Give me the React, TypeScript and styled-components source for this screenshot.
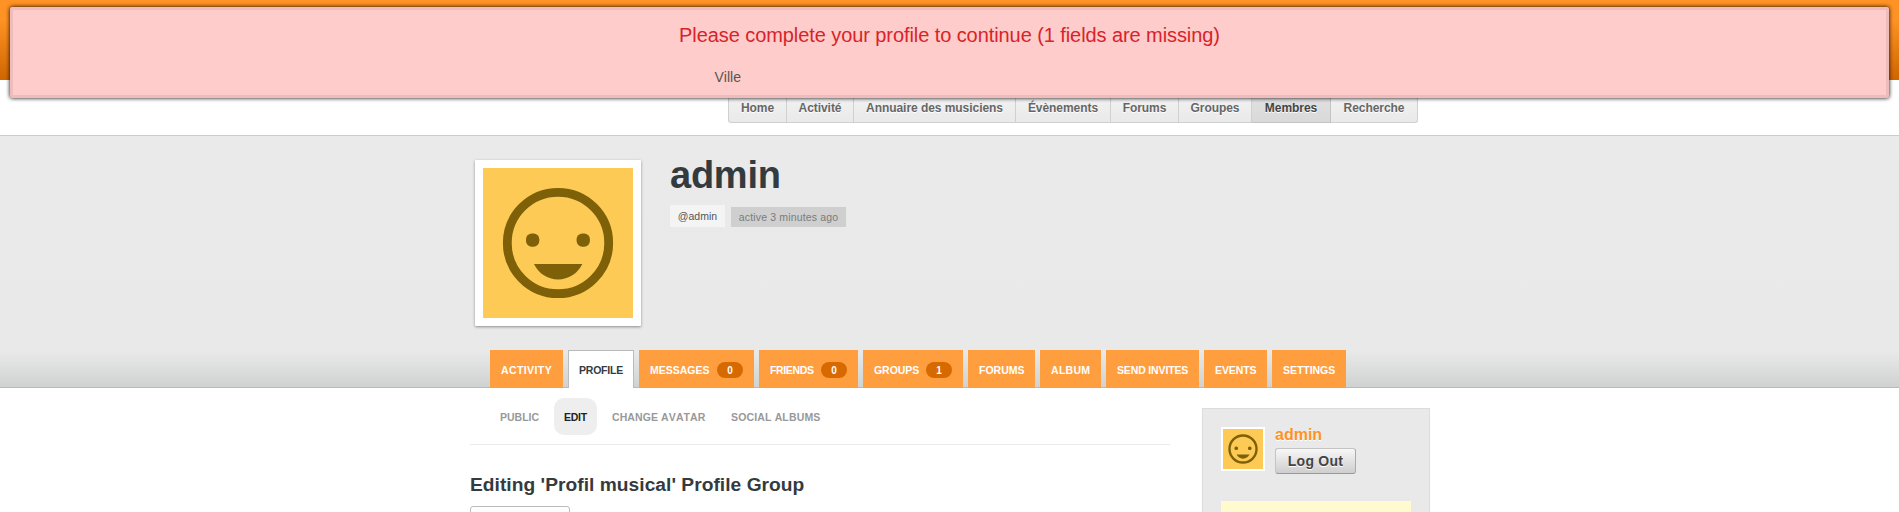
import React from 'react';
import styled, { createGlobalStyle, css } from 'styled-components';

const GlobalStyle = createGlobalStyle`
  * { box-sizing: border-box; }
  html, body { margin: 0; padding: 0; }
  body {
    height: 512px;
    overflow: hidden;
    background: #fff;
    color: #555;
    font-family: "Liberation Sans", Arial, sans-serif;
    font-kerning: none;
  }
  h1, h2, p, ul { margin: 0; padding: 0; }
  ul { list-style: none; }
`;

const Page = styled.div`
  position: relative;
  height: 512px;
  overflow: hidden;
`;

const Container = styled.div`
  width: 961px;
  margin: 0 auto;
  padding-left: 1px;
`;

const Alert = styled.div`
  position: absolute;
  z-index: 10;
  top: 7px;
  left: 10px;
  right: 10px;
  height: 91px;
  padding-top: 13px;
  border: 3px solid #eebcbc;
  border-radius: 2px;
  background: #fecccb;
  box-shadow: 0 0 4px 0 #000;
`;

const AlertTitle = styled.p`
  color: #d8232a;
  font-size: 20px;
  line-height: 24px;
  letter-spacing: -0.08px;
  text-align: center;
`;

const AlertField = styled.p`
  width: 470px;
  margin: 20px auto 0;
  font-size: 14px;
  line-height: 20px;
`;

const TopBar = styled.div`
  height: 80px;
  background: linear-gradient(#ff9224 0%, #ff9224 25%, #ce6500 100%);
`;

const NavBar = styled.div`
  height: 56px;
  border-bottom: 1px solid #ccc;
`;

const NavList = styled.ul`
  display: flex;
  width: 690px;
  height: 43px;
  margin-left: 258px;
  border: 1px solid #d0d0d0;
  border-top: 0;
  border-radius: 0 0 3px 3px;
  background: linear-gradient(#f8f8f8, #e9e9e9);
`;

const NavItem = styled.li<{ $w: number; $active?: boolean }>`
  width: ${p => p.$w}px;
  flex: none;
  padding-top: 19px;
  border-right: 1px solid #d0d0d0;
  font-size: 12px;
  font-weight: bold;
  line-height: 18px;
  letter-spacing: -0.05px;
  text-align: center;
  white-space: nowrap;
  text-shadow: 0 1px 0 #fff;
  color: #666;
  &:last-child { border-right: 0; }
  ${p => p.$active && css`
    height: 43px;
    color: #444;
    background: linear-gradient(#e6e6e6, #d9d9d9);
    border: 1px solid #c4c4c4;
    border-top: 0;
    border-left: 0;
  `}
`;

const Hero = styled.header`
  height: 252px;
  border-bottom: 1px solid #b9b9bb;
  background: linear-gradient(#eaeaea 0, #e9e9e9 215px, #d0d2d2 251px);
`;

const HeroTop = styled.div`
  display: flex;
  height: 214px;
  padding: 24px 0 0 5px;
`;

const AvatarCard = styled.div`
  width: 166px;
  height: 166px;
  padding: 8px;
  border-radius: 1px;
  background: #fff;
  box-shadow: 0 1px 3px rgba(0, 0, 0, 0.4);
`;

const FaceSvg = styled.svg`
  display: block;
`;

const Identity = styled.div`
  margin-left: 29px;
`;

const UserTitle = styled.h1`
  height: 45px;
  margin-top: -8px;
  color: #333b3f;
  font-size: 38px;
  line-height: 46px;
  letter-spacing: -0.25px;
`;

const Tags = styled.div`
  display: flex;
  align-items: flex-end;
  gap: 6px;
  height: 30px;
`;

const Tag = styled.span<{ $w: number; $h: number; $muted?: boolean }>`
  width: ${p => p.$w}px;
  height: ${p => p.$h}px;
  background: ${p => (p.$muted ? '#cfcfcf' : '#f4f4f4')};
  color: ${p => (p.$muted ? '#7b7b7b' : '#555')};
  font-size: 10.5px;
  letter-spacing: ${p => (p.$muted ? 0.15 : 0)}px;
  line-height: ${p => p.$h}px;
  text-align: center;
  white-space: nowrap;
`;

const Tabs = styled.ul`
  display: flex;
  gap: 5px;
  padding-left: 20px;
`;

const Tab = styled.li<{ $w: number; $track: number; $active?: boolean }>`
  display: flex;
  align-items: center;
  justify-content: space-between;
  width: ${p => p.$w}px;
  height: 38px;
  padding: 2px 11px 0;
  flex: none;
  background: #ff9e3f;
  color: #fff;
  font-size: 10.5px;
  font-weight: bold;
  letter-spacing: ${p => p.$track}px;
  white-space: nowrap;
  ${p => p.$active && css`
    padding: 1px 10px 0;
    border: 1px solid #bbb;
    border-bottom: 0;
    background: #fff;
    color: #333b3f;
  `}
`;

const Count = styled.span`
  width: 26px;
  height: 16px;
  margin-top: -1px;
  border-radius: 8px;
  background: #d66a00;
  font-size: 10px;
  line-height: 17px;
  letter-spacing: 0;
  text-align: center;
`;

const Columns = styled.div`
  display: flex;
  justify-content: space-between;
  align-items: flex-start;
`;

const Main = styled.main`
  width: 700px;
`;

const SubNav = styled.ul`
  display: flex;
  gap: 5px;
  height: 57px;
  padding: 10px 0 0 20px;
  border-bottom: 1px solid #eaeaea;
`;

const SubItem = styled.li<{ $w: number; $track: number; $active?: boolean }>`
  width: ${p => p.$w}px;
  height: 37px;
  padding-left: 10px;
  border-radius: 10px;
  background: ${p => (p.$active ? '#eee' : 'none')};
  color: ${p => (p.$active ? '#222' : '#999')};
  font-size: 10.5px;
  font-weight: bold;
  line-height: 38px;
  letter-spacing: ${p => p.$track}px;
  white-space: nowrap;
`;

const GroupTitle = styled.h2`
  margin-top: 27px;
  color: #333b3f;
  font-size: 19.2px;
  line-height: 26px;
  letter-spacing: 0.03px;
`;

const GroupButton = styled.div`
  width: 100px;
  height: 30px;
  margin-top: 8px;
  border: 1px solid #bbb;
  border-radius: 3px;
  background: linear-gradient(#fff, #ededed);
`;

const Sidebar = styled.aside`
  width: 228px;
  height: 140px;
  margin-top: 20px;
  padding: 18px;
  border: 1px solid #dcdcdc;
  background: #e9e9e9;
`;

const Account = styled.div`
  display: flex;
  gap: 10px;
  height: 74px;
`;

const Thumb = styled.div`
  width: 44px;
  height: 44px;
  border: 2px solid #fff;
`;

const AccountName = styled.p`
  height: 21px;
  color: #ff9224;
  font-size: 16px;
  font-weight: bold;
  line-height: 16px;
  text-shadow: 0 1px 0 #fff;
`;

const LogOut = styled.button`
  display: block;
  width: 81px;
  height: 26px;
  padding: 0;
  border: 1px solid #bbb;
  border-color: #c4c4c4 #aaa #999 #c4c4c4;
  border-radius: 3px;
  background: linear-gradient(#f7f7f7, #cecece);
  color: #444;
  font: bold 14px/24px "Liberation Sans", Arial, sans-serif;
  letter-spacing: 0.25px;
  text-shadow: 0 1px 0 #fff;
`;

const Notice = styled.div`
  width: 190px;
  height: 60px;
  background: #fffbcf;
`;

function Face({ size }: { size: number }) {
  return (
    <FaceSvg width={size} height={size} viewBox="0 0 150 150">
      <rect width="150" height="150" fill="#fcca55" />
      <circle cx="75" cy="75" r="50.7" fill="none" stroke="#7d6008" strokeWidth="8.8" />
      <rect x="43" y="65.5" width="13.3" height="13.2" rx="5.7" fill="#7d6008" />
      <rect x="93.6" y="65.5" width="13.3" height="13.2" rx="5.7" fill="#7d6008" />
      <path d="M51 96H99.3C94.5 105.8 85.5 111.4 75 111.4S55.8 105.8 51 96Z" fill="#7d6008" />
    </FaceSvg>
  );
}

const navItems = [
  { label: 'Home', w: 58 },
  { label: 'Activité', w: 67 },
  { label: 'Annuaire des musiciens', w: 162 },
  { label: 'Évènements', w: 95 },
  { label: 'Forums', w: 68 },
  { label: 'Groupes', w: 73 },
  { label: 'Membres', w: 79, active: true },
  { label: 'Recherche', w: 86 },
];

const tabs: { label: string; w: number; track: number; count?: number }[] = [
  { label: 'Activity', w: 73, track: 0.4 },
  { label: 'Profile', w: 66, track: -0.22 },
  { label: 'Messages', w: 115, track: 0, count: 0 },
  { label: 'Friends', w: 99, track: -0.35, count: 0 },
  { label: 'Groups', w: 100, track: -0.05, count: 1 },
  { label: 'Forums', w: 67, track: 0 },
  { label: 'Album', w: 61, track: 0.3 },
  { label: 'Send Invites', w: 93, track: -0.15 },
  { label: 'Events', w: 63, track: -0.1 },
  { label: 'Settings', w: 74, track: -0.05 },
];

const subItems = [
  { label: 'Public', w: 59, track: 0 },
  { label: 'Edit', w: 43, track: -0.25, active: true },
  { label: 'Change Avatar', w: 114, track: 0.1 },
  { label: 'Social Albums', w: 110, track: 0.15 },
];

export default function App() {
  return (
    <Page>
      <GlobalStyle />
      <Alert>
        <AlertTitle>Please complete your profile to continue (1 fields are missing)</AlertTitle>
        <AlertField>Ville</AlertField>
      </Alert>
      <TopBar />
      <NavBar>
        <Container>
          <NavList>
            {navItems.map(n => (
              <NavItem key={n.label} $w={n.w} $active={n.active}>{n.label}</NavItem>
            ))}
          </NavList>
        </Container>
      </NavBar>
      <Hero>
        <Container>
          <HeroTop>
            <AvatarCard><Face size={150} /></AvatarCard>
            <Identity>
              <UserTitle>admin</UserTitle>
              <Tags>
                <Tag $w={55} $h={22}>@admin</Tag>
                <Tag $w={115} $h={20} $muted>active 3 minutes ago</Tag>
              </Tags>
            </Identity>
          </HeroTop>
          <Tabs>
            {tabs.map(t => (
              <Tab key={t.label} $w={t.w} $track={t.track} $active={t.label === 'Profile'}>
                {t.label.toUpperCase()}
                {t.count !== undefined && <Count>{t.count}</Count>}
              </Tab>
            ))}
          </Tabs>
        </Container>
      </Hero>
      <Container>
        <Columns>
          <Main>
            <SubNav>
              {subItems.map(s => (
                <SubItem key={s.label} $w={s.w} $track={s.track} $active={s.active}>
                  {s.label.toUpperCase()}
                </SubItem>
              ))}
            </SubNav>
            <GroupTitle>Editing 'Profil musical' Profile Group</GroupTitle>
            <GroupButton />
          </Main>
          <Sidebar>
            <Account>
              <Thumb><Face size={40} /></Thumb>
              <div>
                <AccountName>admin</AccountName>
                <LogOut>Log Out</LogOut>
              </div>
            </Account>
            <Notice />
          </Sidebar>
        </Columns>
      </Container>
    </Page>
  );
}
